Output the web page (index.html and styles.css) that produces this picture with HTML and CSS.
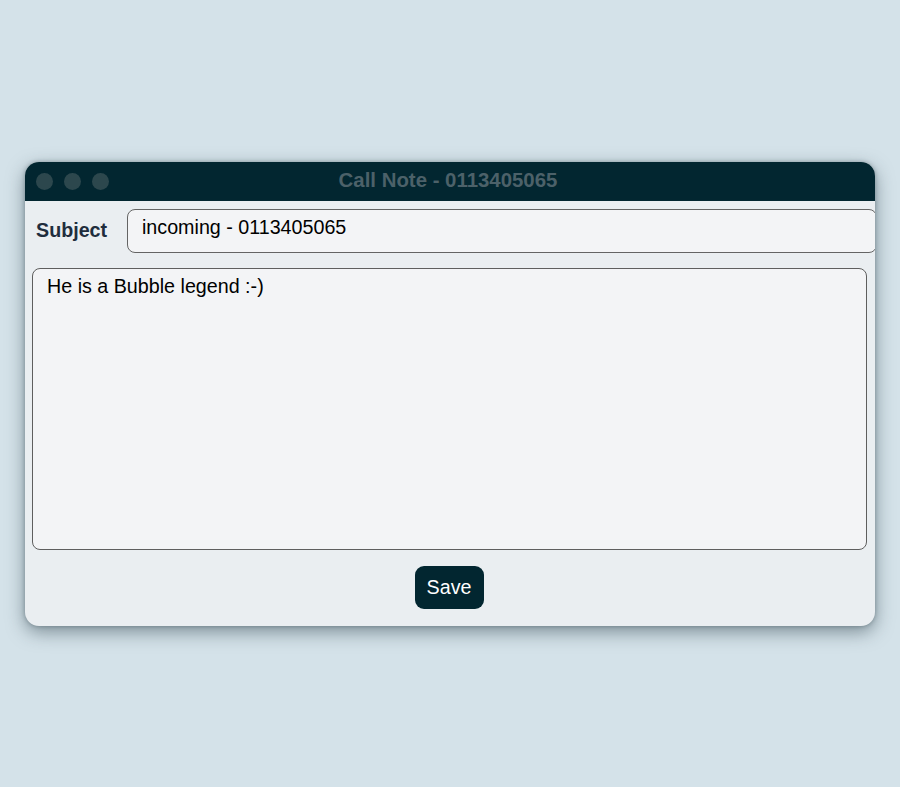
FILE: index.html
```html
<!DOCTYPE html>
<html>
<head>
<meta charset="utf-8">
<link rel="stylesheet" href="styles.css">
</head>
<body>
<div class="window">
  <div class="titlebar">
    <div class="dots"><span class="dot"></span><span class="dot"></span><span class="dot"></span></div>
    <div class="title">Call Note - 0113405065</div>
  </div>
  <div class="content">
    <div class="subject-row">
      <label class="subject-label">Subject</label>
      <div class="subject-input">incoming - 0113405065</div>
    </div>
    <div class="note">He is a Bubble legend :-)</div>
    <div class="actions"><button class="save">Save</button></div>
  </div>
</div>
</body>
</html>
```
FILE: styles.css
```css
html, body {
  margin: 0;
  height: 100%;
}
body {
  background: #d4e2e9;
  font-family: "Liberation Sans", Arial, sans-serif;
  display: flex;
  align-items: center;
  justify-content: center;
}
.window {
  width: 850px;
  height: 464px;
  border-radius: 14px;
  overflow: hidden;
  background: #eaeef1;
  box-shadow: 0 6px 18px rgba(40, 60, 70, 0.5), 0 0 4px rgba(40, 60, 70, 0.35);
  display: flex;
  flex-direction: column;
}
.titlebar {
  height: 39px;
  flex: none;
  background: #022630;
  display: flex;
  align-items: center;
  position: relative;
}
.dots {
  display: flex;
  gap: 11px;
  padding-left: 11px;
}
.dot {
  width: 17px;
  height: 17px;
  border-radius: 50%;
  background: #2c474d;
}
.title {
  position: absolute;
  left: 0;
  right: 4px;
  text-align: center;
  color: #4c6169;
  font-weight: bold;
  font-size: 20.4px;
  top: 7px;
}
.content {
  flex: 1;
  display: flex;
  flex-direction: column;
  padding: 8px 0 17px 0;
}
.subject-row {
  display: flex;
  align-items: center;
  height: 44px;
}
.subject-label {
  width: 91px;
  padding-left: 11px;
  font-weight: bold;
  font-size: 19.7px;
  color: #1f2d3d;
}
.subject-input {
  flex: 1;
  box-sizing: border-box;
  height: 44px;
  margin-right: -2px;
  border: 1.5px solid #646464;
  border-radius: 8px;
  background: #f3f4f6;
  font-size: 19.7px;
  color: #000;
  padding: 6px 14px;
}
.note {
  margin: 15px 8px 0 7px;
  height: 282px;
  box-sizing: border-box;
  border: 1.5px solid #5e5e5e;
  border-radius: 8px;
  background: #f3f4f6;
  font-size: 19.7px;
  color: #000;
  padding: 6px 14px;
}
.actions {
  display: flex;
  justify-content: center;
  margin-top: 16px;
}
.save {
  width: 69px;
  height: 43px;
  margin-right: 2px;
  border: none;
  border-radius: 9px;
  background: #022630;
  color: #fff;
  font-family: "Liberation Sans", Arial, sans-serif;
  font-size: 19.7px;
  padding: 0;
}
```
